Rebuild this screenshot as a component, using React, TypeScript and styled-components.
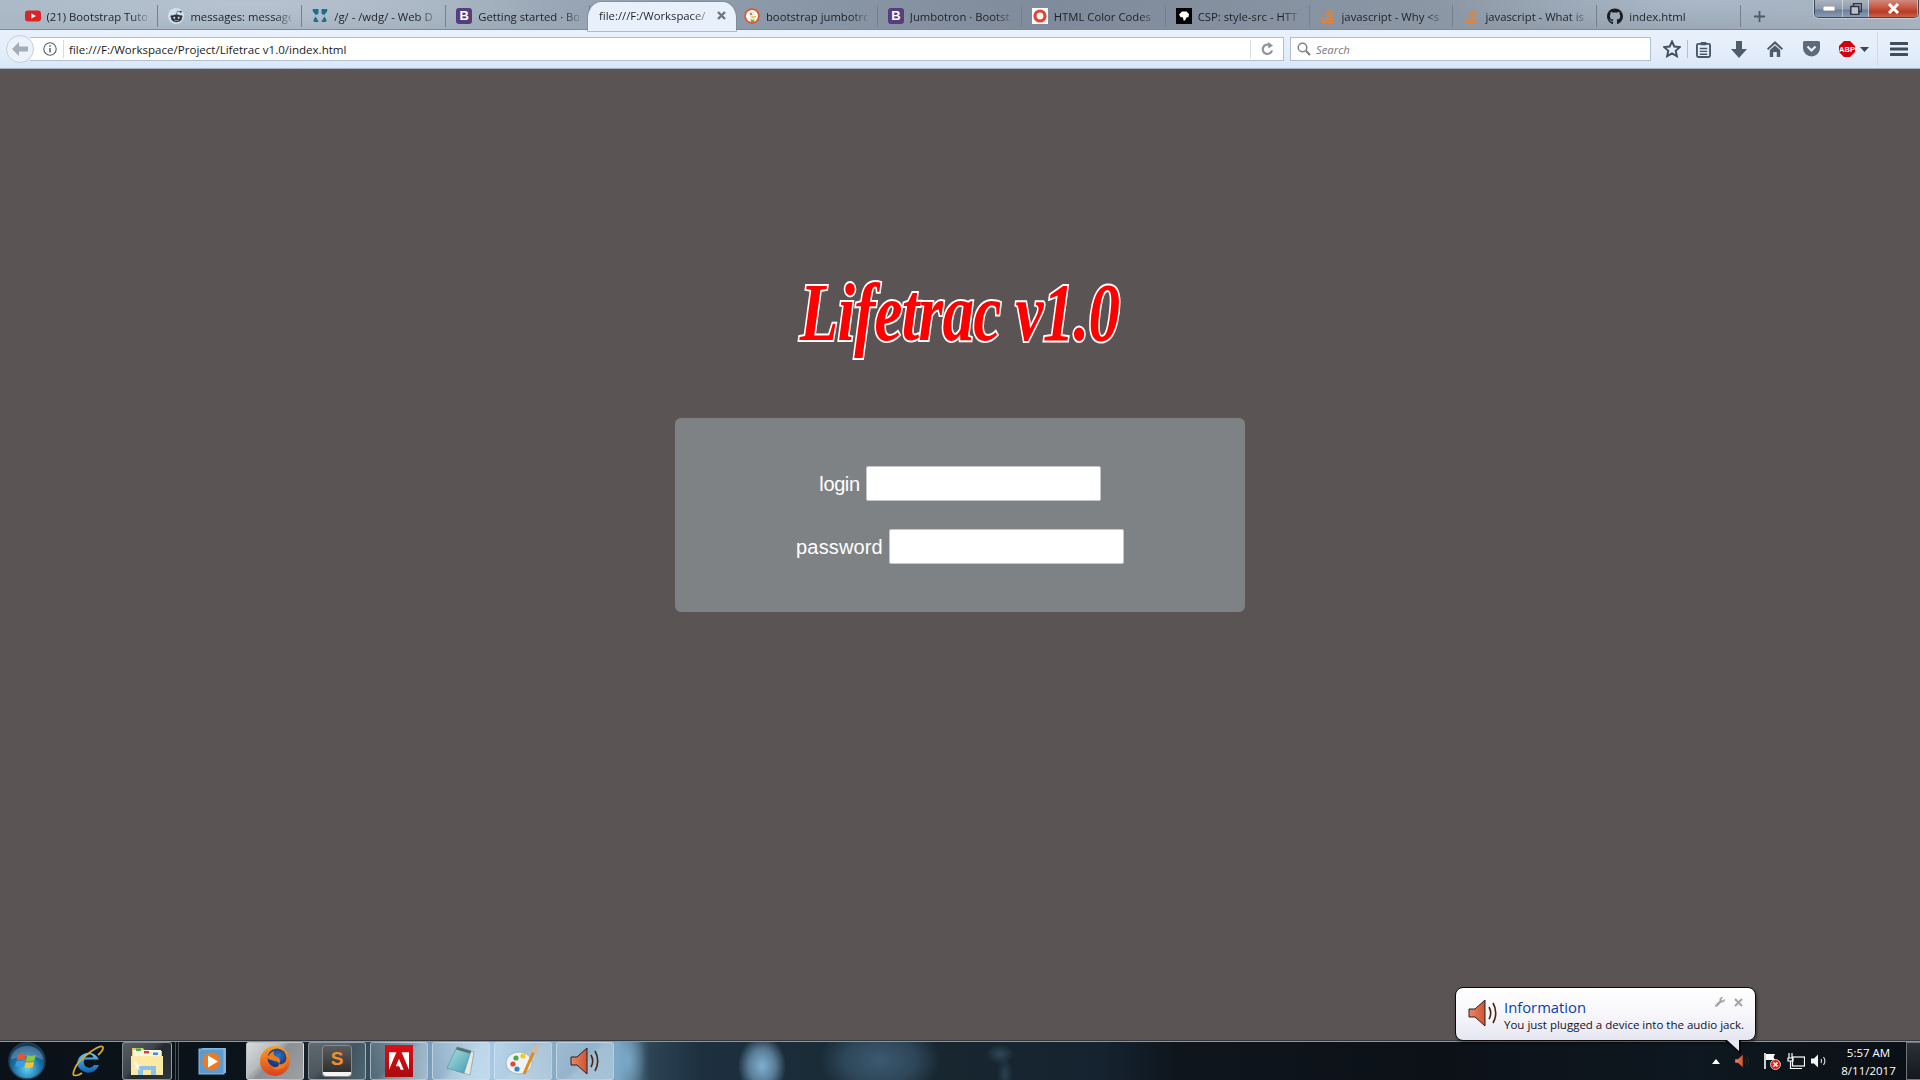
import React from 'react';
import styled, { createGlobalStyle } from 'styled-components';
import { FaGithub, FaRedditAlien, FaStackOverflow, FaWrench } from 'react-icons/fa';
import { SiAdobe } from 'react-icons/si';

const UI = '"Open Sans", "Noto Sans", "Liberation Sans", sans-serif';

const Global = createGlobalStyle`
  html, body { margin: 0; padding: 0; height: 100%; overflow: hidden; }
  #root { height: 100%; }
  * { box-sizing: border-box; }
`;

const Screen = styled.div`
  position: relative;
  width: 1920px;
  height: 1080px;
  display: flex;
  flex-direction: column;
  background: #5a5454;
  font-family: ${UI};
  overflow: hidden;
`;

const TabStrip = styled.div`
  height: 30px;
  flex: none;
  display: flex;
  padding-left: 14.5px;
  border-bottom: 1px solid #7d8997;
  background:
    radial-gradient(ellipse 260px 40px at 1700px 0, rgba(190, 205, 220, 0.55), transparent),
    radial-gradient(ellipse 300px 30px at 250px 4px, rgba(205, 215, 225, 0.45), transparent),
    linear-gradient(90deg, #a9b7c5 0%, #a4b1bf 22%, #8f9cab 36%, #7f8b9a 55%, #8b97a5 75%, #98a4b2 92%, #a7b3c0 100%);
`;

const Tab = styled.div<{ $active?: boolean }>`
  position: relative;
  flex: none;
  display: flex;
  align-items: center;
  gap: 6px;
  font-size: 11.3px;
  color: #1e2126;
  ${(p) =>
    p.$active
      ? `
    width: 147.9px;
    height: 29px;
    margin: 2px -2px 0;
    padding: 0 9px 2px 11px;
    background: #e8f1fb;
    border-radius: 13px 13px 0 0 / 16px 16px 0 0;
    box-shadow: 0 0 0 1px rgba(110, 125, 140, 0.45);
    z-index: 1;
  `
      : `
    width: 143.9px;
    height: 22px;
    margin-top: 5px;
    padding: 0 10px;
    border-right: 1px solid #75808d;
  `}
`;

const TabLabel = styled.span`
  flex: 1;
  min-width: 0;
  white-space: nowrap;
  -webkit-mask-image: linear-gradient(90deg, #000 84%, rgba(0, 0, 0, 0.25) 100%);
  mask-image: linear-gradient(90deg, #000 84%, rgba(0, 0, 0, 0.25) 100%);
`;

const TabIcon = styled.span`
  flex: none;
  width: 16px;
  height: 16px;
  display: flex;
  align-items: center;
  justify-content: center;
  & > svg { display: block; }
`;

const BootstrapMark = styled.span`
  flex: none;
  width: 16px;
  height: 16px;
  border-radius: 3px;
  background: #563d7c;
  color: #fff;
  font: 700 13px/16px "Liberation Sans", sans-serif;
  text-align: center;
`;

const NewTab = styled.div`
  width: 36px;
  display: flex;
  align-items: center;
  justify-content: center;
  height: 22px;
  margin-top: 5px;
  color: #4f5b69;
`;

const WindowControls = styled.div`
  margin-left: auto;
  margin-right: 1px;
  width: 105px;
  height: 18px;
  display: flex;
  border: 1px solid #3c4654;
  border-top: 0;
  border-radius: 0 0 5px 5px;
  overflow: hidden;
  box-shadow: 0 0 0 1px rgba(255, 255, 255, 0.35);
`;

const WinButton = styled.div<{ $w: number; $close?: boolean }>`
  width: ${(p) => p.$w}px;
  display: flex;
  align-items: center;
  justify-content: center;
  border-right: 1px solid rgba(255, 255, 255, 0.45);
  background: ${(p) =>
    p.$close
      ? 'linear-gradient(180deg, #d08a80 0%, #c9563f 45%, #b83a24 70%, #c9654e 100%)'
      : 'linear-gradient(180deg, #aab4c0 0%, #8f9cac 50%, #6d7f98 60%, #8a9cb5 100%)'};
`;

const NavBar = styled.div`
  height: 39px;
  flex: none;
  display: flex;
  align-items: center;
  padding-left: 6px;
  background: linear-gradient(180deg, #e8f1fb 0%, #e4eefa 60%, #d9e7f6 100%);
  border-bottom: 1px solid #a4b4c6;
`;

const BackButton = styled.div`
  position: relative;
  z-index: 1;
  flex: none;
  width: 28px;
  height: 28px;
  border-radius: 50%;
  border: 1px solid #c3cfdb;
  background: #ebf2fa;
  display: flex;
  align-items: center;
  justify-content: center;
`;

const UrlBox = styled.div`
  flex: none;
  width: 1254px;
  height: 24px;
  margin-left: -4px;
  padding: 0 0 0 13px;
  display: flex;
  align-items: center;
  background: #fff;
  border: 1px solid #b1c0d0;
  border-left: 0;
`;

const InfoIcon = styled.span`
  flex: none;
  width: 14px;
  height: 14px;
  display: flex;
`;

const UrlDivider = styled.span`
  flex: none;
  width: 1px;
  height: 18px;
  background: #d5dce4;
  margin: 0 6px;
`;

const UrlText = styled.span`
  flex: 1;
  margin-left: -1px;
  font-size: 11.55px;
  color: #1c1c24;
  white-space: nowrap;
`;

const ReloadSlot = styled.span`
  flex: none;
  width: 26px;
  padding-right: 6px;
  display: flex;
  justify-content: center;
`;

const SearchBox = styled.div`
  flex: none;
  width: 361px;
  height: 24px;
  margin-left: 6px;
  padding-left: 6px;
  display: flex;
  align-items: center;
  gap: 5px;
  background: #fff;
  border: 1px solid #b1c0d0;
`;

const SearchHint = styled.span`
  font-size: 11.3px;
  font-style: italic;
  color: #77797d;
`;

const ToolButton = styled.div<{ $w: number; $pad?: number }>`
  flex: none;
  width: ${(p) => p.$w}px;
  padding-left: ${(p) => p.$pad ?? 0}px;
  height: 24px;
  display: flex;
  align-items: center;
  justify-content: center;
`;

const ToolDivider = styled.span<{ $tall?: boolean }>`
  flex: none;
  width: 1px;
  height: ${(p) => (p.$tall ? 34 : 18)}px;
  background: ${(p) => (p.$tall ? '#cfdbe8' : '#b3c0ce')};
`;

const Page = styled.main`
  flex: 1;
  min-height: 0;
  display: flex;
  flex-direction: column;
  align-items: center;
  background: #5a5454;
`;

const Title = styled.h1`
  margin: 194px 0 0;
  height: 100px;
  font-family: "Liberation Serif", serif;
  font-style: italic;
  font-weight: 700;
  font-size: 82px;
  line-height: 100px;
  letter-spacing: -1px;
  white-space: nowrap;
  color: #ff0000;
  -webkit-text-stroke: 4px #fff;
  paint-order: stroke fill;
  transform: scaleX(0.77);
`;

const LoginCard = styled.form`
  margin-top: 55px;
  width: 570px;
  height: 194px;
  padding-top: 48px;
  display: flex;
  flex-direction: column;
  gap: 28px;
  background: #7f8284;
  border-radius: 6px;
`;

const Field = styled.label`
  height: 35px;
  display: flex;
  align-items: center;
  justify-content: center;
  gap: 6px;
  font-family: "Liberation Sans", Arial, sans-serif;
  font-size: 20px;
  color: #fff;
`;

const FieldName = styled.span<{ $track: number }>`
  padding-top: 2px;
  letter-spacing: ${(p) => p.$track}px;
`;

const FieldInput = styled.input`
  width: 235px;
  height: 35px;
  padding: 0 6px;
  background: #fff;
  border: 1px solid #c6c7cc;
  border-radius: 2px;
  outline: none;
`;

const Taskbar = styled.footer`
  height: 39px;
  flex: none;
  display: flex;
  border-top: 1px solid #8f979e;
  box-shadow: 0 -1px 0 #35383c;
  background:
    radial-gradient(ellipse 24px 30px at 762px 24px, rgba(140, 190, 226, 0.9), rgba(140, 190, 226, 0.55) 55%, transparent),
    radial-gradient(ellipse 14px 10px at 1000px 12px, rgba(70, 105, 130, 0.5), transparent),
    radial-gradient(ellipse 8px 16px at 1005px 32px, rgba(70, 105, 130, 0.4), transparent),
    radial-gradient(ellipse 60px 40px at 880px 18px, rgba(66, 98, 124, 0.85), rgba(66, 98, 124, 0.5) 60%, transparent),
    radial-gradient(ellipse 18px 34px at 628px 18px, rgba(128, 178, 210, 0.75), transparent),
    linear-gradient(90deg,
      #0a1118 0, #0c141b 290px, #1d2b35 320px, #36505f 372px, #6f93ad 420px, #a3c7e2 470px,
      #a5c8e2 500px, #85a9c4 560px, #7ba6c4 618px, #2c4454 650px, #1d3040 700px, #1a2c38 800px,
      #17262f 960px, #152330 1100px, #0e151c 1180px, #0c1118 1440px, #0e1820 1700px, #0a0f14 1920px);
`;

const StartSlot = styled.div`
  flex: none;
  width: 54px;
  display: flex;
  align-items: center;
  justify-content: center;
`;

const PinSlot = styled.div<{ $w: number }>`
  flex: none;
  width: ${(p) => p.$w}px;
  display: flex;
  align-items: center;
  justify-content: center;
`;

const TaskButton = styled.div<{ $w?: number; $tone?: 'bright' | 'dark' | 'glass' }>`
  flex: none;
  width: ${(p) => p.$w ?? 58}px;
  margin-right: 4px;
  display: flex;
  align-items: center;
  justify-content: center;
  border: 1px solid rgba(220, 230, 240, 0.5);
  border-radius: 3px;
  background: ${(p) =>
    p.$tone === 'bright'
      ? 'linear-gradient(135deg, #d9dcdf 0%, #b9bcbe 35%, #8d9092 48%, #9ea1a3 100%)'
      : p.$tone === 'dark'
        ? 'linear-gradient(135deg, rgba(255,255,255,0.32) 0%, rgba(255,255,255,0.22) 40%, rgba(255,255,255,0.1) 52%, rgba(255,255,255,0.14) 100%)'
        : 'linear-gradient(135deg, rgba(255,255,255,0.2) 0%, rgba(255,255,255,0.14) 45%, rgba(255,255,255,0.28) 55%, rgba(255,255,255,0.32) 100%)'};
`;

const Grip = styled.div`
  flex: none;
  width: 8px;
  margin-left: -4px;
  display: flex;
  gap: 2px;
  padding-left: 3px;
  &::before, &::after {
    content: '';
    width: 1px;
    background: rgba(190, 200, 210, 0.35);
  }
`;

const Tray = styled.div`
  margin-left: auto;
  display: flex;
  align-items: stretch;
`;

const TraySlot = styled.div<{ $w: number }>`
  flex: none;
  width: ${(p) => p.$w}px;
  display: flex;
  align-items: center;
  justify-content: center;
`;

const Clock = styled.div`
  flex: none;
  width: 75px;
  padding-top: 2px;
  color: #fff;
  font-size: 11.5px;
  line-height: 18px;
  text-align: center;
`;

const ShowDesktop = styled.div`
  flex: none;
  width: 14px;
  border: 1px solid #6d7680;
  border-right: 0;
  background: linear-gradient(180deg, #2b3138, #14181d);
`;

const Balloon = styled.aside`
  position: absolute;
  right: 164px;
  bottom: 39px;
  width: 301px;
  height: 54px;
  padding: 9px 8px 0 11px;
  display: flex;
  gap: 5px;
  border: 1px solid #0b0b0b;
  border-radius: 8px;
  background: linear-gradient(180deg, #ffffff 0%, #f7f7fb 50%, #e5e6f1 100%);
  box-shadow: 1px 2px 3px rgba(0, 0, 0, 0.45);
  z-index: 3;
`;

const BalloonTail = styled.span`
  position: absolute;
  right: 14px;
  bottom: -15px;
  width: 17px;
  height: 15px;
  background: #0a0a0a;
  clip-path: polygon(0 0, 100% 0, 100% 100%);
  &::after {
    content: '';
    position: absolute;
    inset: 0;
    background: #e6e7f2;
    clip-path: polygon(3px 0, calc(100% - 2px) 0, calc(100% - 2px) calc(100% - 4px));
  }
`;

const BalloonBody = styled.div`
  flex: 1;
  min-width: 0;
`;

const BalloonTitle = styled.div`
  font-size: 14.8px;
  line-height: 20px;
  color: #0a3fb0;
`;

const BalloonText = styled.div`
  font-size: 11.5px;
  line-height: 15px;
  color: #10122a;
  white-space: nowrap;
`;

const BalloonTools = styled.div`
  position: absolute;
  top: 9px;
  right: 12px;
  display: flex;
  align-items: center;
  gap: 9px;
  color: #a4a6ae;
`;

/* ---------- drawn icons ---------- */

const Speaker = ({ size = 32, arcs = '#4a2410' }: { size?: number; arcs?: string }) => (
  <svg width={size} height={size} viewBox="0 0 32 32">
    <defs>
      <linearGradient id={`cone${size}`} x1="0" x2="1">
        <stop offset="0" stopColor="#e8876a" />
        <stop offset="1" stopColor="#d3532f" />
      </linearGradient>
    </defs>
    <path d="M2 12h6l10-9v26l-10-9H2z" fill={`url(#cone${size})`} stroke="#222" strokeWidth="1" />
    <path d="M22 10c2 3.5 2 8.5 0 12" fill="none" stroke={arcs} strokeWidth="1.6" />
    <path d="M26 6c3.6 6 3.6 14 0 20" fill="none" stroke={arcs} strokeWidth="1.6" />
  </svg>
);

const YouTube = () => (
  <svg width="16" height="16" viewBox="0 0 16 16">
    <rect y="2.5" width="16" height="11" rx="3" fill="#d9252a" />
    <path d="M6.4 5.4v5.2L11 8z" fill="#fff" />
  </svg>
);

const Reddit = () => (
  <svg width="16" height="16" viewBox="0 0 16 16">
    <circle cx="8" cy="8" r="8" fill="#cfe0ee" />
    <foreignObject x="1.5" y="1.5" width="13" height="13">
      <FaRedditAlien size={13} color="#30343a" />
    </foreignObject>
  </svg>
);

const Clover = () => (
  <svg width="16" height="16" viewBox="0 0 16 16">
    <g fill="#1b6f8e">
      <path d="M1 1h5.5v3.2a2.2 2.2 0 0 1-4.4.6A3 3 0 0 1 1 1z" />
      <path d="M15 1H9.500v3.200a2.200 2.200 0 0 0 4.400.6A3 3 0 0 0 15 1z" />
      <path d="M3.700 8.500 6.700 14H2a2.500 2.500 0 0 1 0-3z" />
      <path d="M12.300 8.500 9.300 14H14a2.500 2.500 0 0 0 0-3z" />
    </g>
  </svg>
);

const Duck = () => (
  <svg width="16" height="16" viewBox="0 0 16 16">
    <circle cx="8" cy="8" r="7.800" fill="#de5833" />
    <circle cx="8" cy="8" r="6" fill="#fff" />
    <path d="M5 3.500c3-1.500 6 .5 5.500 4l.5 6H6.500C7 10 4 7 5 3.500z" fill="#f1e6d8" />
    <path d="M7.500 8.500 12 8v1.500l-4.500.5z" fill="#f0c419" />
    <path d="M6.500 11.500 10.500 12l-.5 2H7z" fill="#5fb246" />
    <circle cx="7" cy="6" r=".8" fill="#222" />
  </svg>
);

const ColorCodes = () => (
  <svg width="16" height="16" viewBox="0 0 16 16">
    <rect width="16" height="16" fill="#fff" />
    <circle cx="8" cy="8" r="5" fill="none" stroke="#e2452f" strokeWidth="3.200" />
  </svg>
);

const Mdn = () => (
  <svg width="16" height="16" viewBox="0 0 16 16">
    <rect width="16" height="16" fill="#000" />
    <path d="M3 6.500 6 3.500h4.500L13 6l-.5 3-2 .5L9 12.500H7.500L7 9.500 4.500 9z" fill="#fff" />
  </svg>
);

const Orb = () => (
  <svg width="38" height="38" viewBox="0 0 38 38">
    <defs>
      <radialGradient id="orb" cx="50%" cy="72%" r="70%">
        <stop offset="0" stopColor="#5fd0f0" />
        <stop offset=".55" stopColor="#1a6fa8" />
        <stop offset="1" stopColor="#0b3558" />
      </radialGradient>
    </defs>
    <circle cx="19" cy="19" r="18" fill="url(#orb)" stroke="#2a3c4c" strokeWidth="1.500" />
    <path d="M3 18a16 14 0 0 1 32 0c-10-5-22-5-32 0z" fill="#fff" opacity=".22" />
    <path d="M10 13c3-1.500 5-1 8 0l-1.300 5.500c-3-1-5-1.300-8-.2z" fill="#e8552f" />
    <path d="M19.200 13.300c3 1 5.300 1 8.500-.4l-1.300 5.700c-3 1.300-5.500 1.200-8.400.3z" fill="#8fc63f" />
    <path d="M8.500 19.300c3-1 5-.8 8 .2l-1.300 5.500c-3-1-5-1.200-8-.2z" fill="#3d9be0" />
    <path d="M17.800 19.900c3 1 5.300 1 8.400-.3l-1.300 5.700c-3 1.300-5.500 1.300-8.400.3z" fill="#f7c22e" />
  </svg>
);

const Ie = () => (
  <svg width="36" height="36" viewBox="0 0 36 36">
    <defs>
      <linearGradient id="iee" x1="0" y1="0" x2="0" y2="1">
        <stop offset="0" stopColor="#66c8f2" />
        <stop offset="1" stopColor="#0d5fb0" />
      </linearGradient>
    </defs>
    <path d="M7 21a11.500 11.500 0 0 1 22-4.500H14.500A5 5 0 0 0 24 22h5a11.500 11.500 0 0 1-22-1zm7.500-6.500h9a4.700 4.700 0 0 0-9 0z" fill="url(#iee)" fillRule="evenodd" />
    <path d="M5 32c-4 2-1-10 9-18C22 7 33 0 33 5c0 3-3 5-5 7" fill="none" stroke="#d9a92e" strokeWidth="1.800" />
    <path d="M5 32c1 1 4 0 7-2" fill="none" stroke="#d9a92e" strokeWidth="1.800" />
  </svg>
);

const Folder = () => (
  <svg width="34" height="32" viewBox="0 0 34 32">
    <path d="M2 3h11l2 3h17v24H2z" fill="#e7c66b" />
    <rect x="3" y="5" width="28" height="7" fill="#f9f5e3" />
    <rect x="6" y="3.500" width="5" height="2.500" fill="#49b04a" />
    <rect x="14" y="6" width="5" height="2.500" fill="#d9443a" />
    <rect x="23" y="7.500" width="5" height="2.500" fill="#3b8ee0" />
    <path d="M1 11h32v19H1z" fill="#fbe9a4" />
    <path d="M8 30v-9h18v9h-5v-5h-8v5z" fill="#8dc1e6" />
    <path d="M6 16l2 4 3-1-2 3 1 4-3-3-3 1 2-3-2-3z" fill="#fff" opacity=".8" />
  </svg>
);

const Wmp = () => (
  <svg width="30" height="30" viewBox="0 0 30 30">
    <rect x="4" y="2" width="24" height="25" fill="#7fb0d6" />
    <rect x="1" y="3" width="25" height="25" fill="#5d9bce" stroke="#8cbbe0" />
    <circle cx="13.500" cy="15.500" r="9" fill="#f07a1f" />
    <path d="M10 9.500 20 15.500 10 21.500z" fill="#fff" />
  </svg>
);

const Firefox = () => (
  <svg width="32" height="32" viewBox="0 0 32 32">
    <defs>
      <radialGradient id="ffb" cx="55%" cy="40%" r="50%">
        <stop offset="0" stopColor="#2f77c4" />
        <stop offset="1" stopColor="#123a80" />
      </radialGradient>
      <linearGradient id="ffo" x1="0" y1="0" x2="0" y2="1">
        <stop offset="0" stopColor="#f8a424" />
        <stop offset="1" stopColor="#dc3e1e" />
      </linearGradient>
    </defs>
    <circle cx="16" cy="16" r="15" fill="url(#ffo)" />
    <circle cx="18" cy="13" r="9.500" fill="url(#ffb)" />
    <path d="M7 5c-1 6 1 9 5 10 4 1 8 1 8 4s-4 4-7 3c3 4 10 3 13-1 2-3 2-6 2-8-1 5-5 7-8 6 2-3 1-6-2-7-3-1-4-3-3-6-3 1-5 3-5 5-1-1-2-3-3-6z" fill="#f07a1f" />
  </svg>
);

const SublimeCard = styled.div`
  position: relative;
  width: 28px;
  height: 30px;
  border-radius: 3px;
  background: linear-gradient(180deg, #5c5c5c, #2f2f2f);
  border-bottom: 4px solid #f4f4f4;
  box-shadow: 0 0 0 1px #888;
  color: #f0902a;
  font: 700 19px/26px "Liberation Sans", sans-serif;
  text-align: center;
`;

const AdobeSquare = styled.div`
  width: 28px;
  height: 32px;
  background: linear-gradient(180deg, #dc0f14, #a80c0f);
  display: flex;
  align-items: center;
  justify-content: center;
  color: #fff;
`;

const Notepad = () => (
  <svg width="34" height="34" viewBox="0 0 34 34">
    <path d="M16 4 30 8 26 31 12 27z" fill="#e6e8e2" stroke="#7b8a8a" strokeWidth=".6" />
    <defs>
      <linearGradient id="np" x1="0" y1="0" x2="1" y2="1">
        <stop offset="0" stopColor="#b7e4e4" />
        <stop offset="1" stopColor="#3d9cb0" />
      </linearGradient>
    </defs>
    <path d="M13 3 27 7 20 29 3 24z" fill="url(#np)" stroke="#4d8e9a" strokeWidth=".6" />
    <path d="M13 3 27 7 26 9.500 12 5.500z" fill="#5d6d72" />
  </svg>
);

const Palette = () => (
  <svg width="36" height="34" viewBox="0 0 36 34">
    <ellipse cx="14" cy="19" rx="13" ry="11" fill="#eef3f6" stroke="#7f98aa" strokeWidth=".6" />
    <circle cx="8" cy="20" r="2.600" fill="#e2453a" />
    <circle cx="11" cy="14" r="2.600" fill="#4fa947" />
    <circle cx="18" cy="12" r="2.600" fill="#f0c72e" />
    <circle cx="12" cy="25" r="2.600" fill="#3d7fc8" />
    <path d="M29 7 19 30" stroke="#e08a1c" strokeWidth="3" />
    <path d="M27 8c0-3 2-6 6-7 1 4 0 7-2 9z" fill="#d8b896" />
  </svg>
);

const Flag = () => (
  <svg width="18" height="18" viewBox="0 0 18 18">
    <path d="M2 1v16" stroke="#fff" strokeWidth="1.600" />
    <path d="M3 2h9l-1.500 3L12 8H3z" fill="#fff" />
    <circle cx="12.500" cy="12.500" r="5" fill="#d8261e" stroke="#fff" strokeWidth=".7" />
    <path d="M10.500 10.500l4 4m0-4-4 4" stroke="#fff" strokeWidth="1.500" />
  </svg>
);

const Network = () => (
  <svg width="18" height="18" viewBox="0 0 18 18">
    <rect x="5.500" y="5" width="12" height="9" fill="#10161c" stroke="#fff" strokeWidth="1.200" />
    <path d="M9 16.500h6M2 1v5M5 1v5M1 6h5v3H1zM3.500 9v7.500H9" fill="none" stroke="#fff" strokeWidth="1.200" />
  </svg>
);

const Volume = () => (
  <svg width="18" height="18" viewBox="0 0 18 18">
    <path d="M1 6.500h3l4-4v13l-4-4H1z" fill="#f2f4f6" />
    <path d="M11 7a4 4 0 0 1 0 4M13.500 5a7 7 0 0 1 0 8" fill="none" stroke="#dfe4e8" strokeWidth="1.100" />
  </svg>
);

const TABS = [
  { icon: <YouTube />, label: '(21) Bootstrap Tuto' },
  { icon: <Reddit />, label: 'messages: message' },
  { icon: <Clover />, label: '/g/ - /wdg/ - Web D' },
  { icon: <BootstrapMark>B</BootstrapMark>, label: 'Getting started · Bo' },
  { active: true, label: 'file:///F:/Workspace/' },
  { icon: <Duck />, label: 'bootstrap jumbotro' },
  { icon: <BootstrapMark>B</BootstrapMark>, label: 'Jumbotron · Bootst' },
  { icon: <ColorCodes />, label: 'HTML Color Codes' },
  { icon: <Mdn />, label: 'CSP: style-src - HTT' },
  { icon: <FaStackOverflow size={16} color="#f0802a" />, label: 'javascript - Why <s' },
  { icon: <FaStackOverflow size={16} color="#f0802a" />, label: 'javascript - What is' },
  { icon: <FaGithub size={17} color="#1a1e22" />, label: 'index.html' },
];

export default function App() {
  return (
    <Screen>
      <Global />
      <TabStrip>
        {TABS.map((t) => (
          <Tab key={t.label} $active={t.active}>
            {t.icon && <TabIcon>{t.icon}</TabIcon>}
            <TabLabel>{t.label}</TabLabel>
            {t.active && (
              <svg width="11" height="11" viewBox="0 0 11 11">
                <path d="M2 2l7 7m0-7-7 7" stroke="#6b7682" strokeWidth="2.400" />
              </svg>
            )}
          </Tab>
        ))}
        <NewTab>
          <svg width="11" height="11" viewBox="0 0 11 11">
            <path d="M5.500 0v11M0 5.500h11" stroke="#4f5b69" strokeWidth="1.800" />
          </svg>
        </NewTab>
        <WindowControls>
          <WinButton $w={28}>
            <svg width="12" height="5" viewBox="0 0 12 5"><rect width="12" height="5" fill="#fff" stroke="#445" strokeWidth=".6" /></svg>
          </WinButton>
          <WinButton $w={26}>
            <svg width="12" height="12" viewBox="0 0 12 12">
              <rect x="3.500" y=".5" width="8" height="8" fill="none" stroke="#334" strokeWidth="1.500" />
              <rect x=".8" y="3.500" width="8" height="8" fill="#b8c2cc" stroke="#334" strokeWidth="1.500" />
            </svg>
          </WinButton>
          <WinButton $w={49} $close>
            <svg width="13" height="11" viewBox="0 0 13 11">
              <path d="M2 1l9 9m0-9-9 9" stroke="#fff" strokeWidth="3" />
            </svg>
          </WinButton>
        </WindowControls>
      </TabStrip>

      <NavBar>
        <BackButton>
          <svg width="16" height="14" viewBox="0 0 16 14">
            <path d="M7 0 0 7l7 7V9.500h9v-5H7z" fill="#a4adb7" />
          </svg>
        </BackButton>
        <UrlBox>
          <InfoIcon>
            <svg width="14" height="14" viewBox="0 0 14 14">
              <circle cx="7" cy="7" r="6.200" fill="none" stroke="#55606c" strokeWidth="1.100" />
              <path d="M7 6v4.500M7 3.200v1.500" stroke="#55606c" strokeWidth="1.500" />
            </svg>
          </InfoIcon>
          <UrlDivider />
          <UrlText>file:///F:/Workspace/Project/Lifetrac v1.0/index.html</UrlText>
          <UrlDivider />
          <ReloadSlot>
            <svg width="13" height="14" viewBox="0 0 13 14">
              <path d="M11 8.500A4.700 4.700 0 1 1 8.500 3" fill="none" stroke="#8d949c" strokeWidth="2.200" />
              <path d="M7 0l5 3.500L7.500 6.500z" fill="#8d949c" />
            </svg>
          </ReloadSlot>
        </UrlBox>
        <SearchBox>
          <svg width="14" height="14" viewBox="0 0 14 14">
            <circle cx="5.500" cy="5.500" r="4.300" fill="none" stroke="#7f8387" strokeWidth="1.500" />
            <path d="M8.800 8.800 13 13" stroke="#7f8387" strokeWidth="2.200" />
          </svg>
          <SearchHint>Search</SearchHint>
        </SearchBox>
        <ToolButton $w={36} $pad={6}>
          <svg width="18" height="18" viewBox="0 0 18 18">
            <path d="M9 1.500 11.300 6.500 16.800 7.100 12.700 10.800 13.900 16.200 9 13.400 4.100 16.200 5.300 10.800 1.200 7.100 6.700 6.500z" fill="none" stroke="#3f4d5c" strokeWidth="1.900" />
          </svg>
        </ToolButton>
        <ToolDivider />
        <ToolButton $w={30}>
          <svg width="15" height="17" viewBox="0 0 16 18">
            <rect x="1" y="3" width="14" height="14" rx="1.500" fill="none" stroke="#4a5866" strokeWidth="2" />
            <rect x="5" y="1" width="6" height="3.500" fill="#4a5866" />
            <path d="M4 8h8M4 11h8M4 14h8" stroke="#4a5866" strokeWidth="1.500" />
          </svg>
        </ToolButton>
        <ToolButton $w={42}>
          <svg width="16" height="17" viewBox="0 0 16 17">
            <path d="M5 0h6v8h5l-8 9-8-9h5z" fill="#4f5d6b" />
          </svg>
        </ToolButton>
        <ToolButton $w={30}>
          <svg width="16" height="16" viewBox="0 0 16 16">
            <path d="M8 0 16 7.500 14.800 9 8 3 1.200 9 0 7.500z" fill="#4f5d6b" />
            <path d="M2.800 9 8 4.500 13.200 9v7H9.800v-5H6.200v5H2.800z" fill="#4f5d6b" />
          </svg>
        </ToolButton>
        <ToolButton $w={42}>
          <svg width="17" height="16" viewBox="0 0 17 16">
            <path d="M1.500 0h14A1.500 1.500 0 0 1 17 1.500V7a8.500 8.500 0 0 1-17 0V1.500A1.500 1.500 0 0 1 1.500 0z" fill="#5d6a78" />
            <path d="M4.500 5.500 8.500 9.500l4-4" fill="none" stroke="#e8f1fb" strokeWidth="2.200" />
          </svg>
        </ToolButton>
        <ToolButton $w={45}>
          <svg width="32" height="16" viewBox="0 0 32 16">
            <path d="M5 0h6l5 5v6l-5 5H5l-5-5V5z" fill="#d4000f" />
            <text x="8" y="10.800" textAnchor="middle" fontFamily="Liberation Sans" fontWeight="700" fontSize="7.500" fill="#fff">ABP</text>
            <path d="M21 6h9l-4.500 5z" fill="#3a4654" />
          </svg>
        </ToolButton>
        <ToolDivider $tall />
        <ToolButton $w={42}>
          <svg width="18" height="14" viewBox="0 0 18 14">
            <path d="M1 0h16a1 1 0 0 1 0 3H1a1 1 0 0 1 0-3zm0 5.500h16a1 1 0 0 1 0 3H1a1 1 0 0 1 0-3zm0 5.500h16a1 1 0 0 1 0 3H1a1 1 0 0 1 0-3z" fill="#3f4d5c" />
          </svg>
        </ToolButton>
      </NavBar>

      <Page>
        <Title>Lifetrac v1.0</Title>
        <LoginCard>
          <Field>
            <FieldName $track={-0.4}>login</FieldName>
            <FieldInput type="text" />
          </Field>
          <Field>
            <FieldName $track={0.15}>password</FieldName>
            <FieldInput type="password" />
          </Field>
        </LoginCard>
      </Page>

      <Taskbar>
        <StartSlot><Orb /></StartSlot>
        <PinSlot $w={68}><Ie /></PinSlot>
        <TaskButton $w={50} $tone="dark"><Folder /></TaskButton>
        <Grip />
        <PinSlot $w={66}><Wmp /></PinSlot>
        <TaskButton $tone="bright"><Firefox /></TaskButton>
        <TaskButton $tone="dark">
          <SublimeCard>S</SublimeCard>
        </TaskButton>
        <TaskButton>
          <AdobeSquare><SiAdobe size={20} /></AdobeSquare>
        </TaskButton>
        <TaskButton><Notepad /></TaskButton>
        <TaskButton><Palette /></TaskButton>
        <TaskButton><Speaker size={32} /></TaskButton>
        <Tray>
          <TraySlot $w={24}>
            <svg width="8" height="5" viewBox="0 0 8 5"><path d="M4 0 8 5H0z" fill="#fff" /></svg>
          </TraySlot>
          <TraySlot $w={28}><Speaker size={16} /></TraySlot>
          <TraySlot $w={4} />
          <TraySlot $w={24}><Flag /></TraySlot>
          <TraySlot $w={23}><Network /></TraySlot>
          <TraySlot $w={24}><Volume /></TraySlot>
          <Clock>
            5:57 AM
            <br />
            8/11/2017
          </Clock>
          <ShowDesktop />
        </Tray>
      </Taskbar>

      <Balloon>
        <Speaker size={32} />
        <BalloonBody>
          <BalloonTitle>Information</BalloonTitle>
          <BalloonText>You just plugged a device into the audio jack.</BalloonText>
        </BalloonBody>
        <BalloonTools>
          <FaWrench size={10} />
          <svg width="9" height="9" viewBox="0 0 9 9">
            <path d="M1 1l7 7m0-7-7 7" stroke="#a4a6ae" strokeWidth="2.200" />
          </svg>
        </BalloonTools>
        <BalloonTail />
      </Balloon>
    </Screen>
  );
}
